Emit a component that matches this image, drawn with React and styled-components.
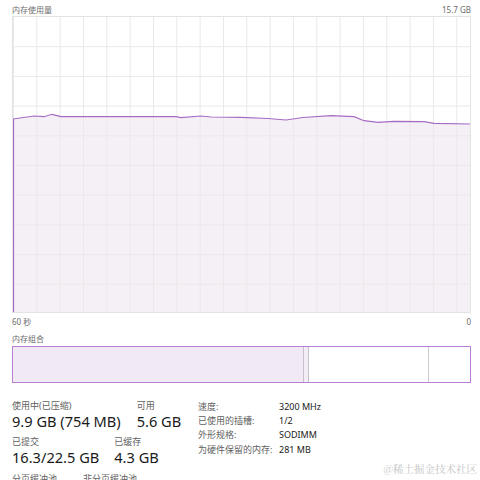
import React from "react";
import styled, { createGlobalStyle } from "styled-components";

const Global = createGlobalStyle`
  html, body { margin: 0; padding: 0; background: #fff; }
  body { font-family: "Noto Sans", "Noto Sans CJK SC", sans-serif; color: #1b1b1b; }
`;

const Page = styled.div`
  position: relative;
  width: 480px;
  height: 480px;
  overflow: hidden;
  box-sizing: border-box;
  padding: 3px 9px 0 12px;
  display: flex;
  flex-direction: column;
  & > * { flex-shrink: 0; }
`;

const AxisRow = styled.div`
  display: flex;
  justify-content: space-between;
  align-items: center;
  height: ${(p) => p.$h}px;
  font-size: 8px;
  color: #6b6b6b;
  line-height: 1;
`;

const GraphBox = styled.div`
  width: 459px;
  height: 297px;
  box-sizing: border-box;
  border: 1px solid #e3e3e3;
  background: #fff;
  svg { display: block; }
`;

const SectionLabel = styled.div`
  font-size: 8px;
  color: #6b6b6b;
  height: 9px;
  line-height: 9px;
  margin-top: ${(p) => p.$mt || 0}px;
`;

const CompBar = styled.div`
  margin-top: 3px;
  width: 459px;
  height: 37px;
  box-sizing: border-box;
  border: 1px solid #b97fd2;
  display: flex;
`;

const Segment = styled.div`
  height: 100%;
  box-sizing: border-box;
  background: ${(p) => p.$bg};
  border-right: ${(p) => (p.$line ? `1px solid ${p.$line}` : "none")};
`;

const Stats = styled.div`
  margin-top: 16px;
  display: flex;
`;

const LeftStats = styled.div`
  width: 186px;
  padding-top: 1px;
  display: flex;
  flex-direction: column;
`;

const StatRow = styled.div`
  display: flex;
  gap: ${(p) => p.$gap}px;
  margin-bottom: ${(p) => p.$mb}px;
`;

const Stat = styled.div`
  display: flex;
  flex-direction: column;
`;

const StatLabel = styled.div`
  font-size: 9px;
  line-height: 11px;
  color: #5f5f5f;
  white-space: nowrap;
`;

const StatValue = styled.div`
  font-size: 14.6px;
  line-height: 20px;
  color: #1a1a1a;
  white-space: nowrap;
`;

const InfoGrid = styled.div`
  display: grid;
  grid-template-columns: 81px auto;
  grid-auto-rows: 14.3px;
  align-items: center;
  font-size: 9px;
  line-height: 11px;
`;

const InfoKey = styled.div`
  color: #5f5f5f;
  white-space: nowrap;
`;

const InfoVal = styled.div`
  color: #1a1a1a;
  white-space: nowrap;
`;

const Watermark = styled.div`
  position: absolute;
  right: 3px;
  top: 461px;
  font-family: "Noto Serif CJK SC", "Liberation Serif", "Noto Sans CJK SC", serif;
  font-size: 10.5px;
  color: #c4c4c4;
  white-space: nowrap;
`;

const W = 457;
const H = 295;
const pts = [
  [0, 102], [21, 99], [31, 99.7], [39, 97.3], [48, 99.7], [163, 99.7], [168, 100.7],
  [188, 99], [198, 100], [228, 100.3], [255, 101.5], [273, 103], [290, 100.5],
  [318, 98.7], [341, 99.7], [351, 103.7], [365, 105.3], [381, 104.3], [411, 104.7],
  [421, 106.3], [457, 107],
];

function Graph() {
  const vlines = [];
  for (let x = 0.5; x < W; x += 23.33) vlines.push(x);
  const hlines = [];
  for (let i = 1; i < 10; i++) hlines.push(i * 29.7);
  const line = pts.map((p) => p.join(",")).join(" ");
  const fill = `0,${H} ${line} ${W},${H}`;
  return (
    <svg width={W} height={H} viewBox={`0 0 ${W} ${H}`}>
      <polygon points={fill} fill="#f4f0f6" />
      {vlines.map((x) => (
        <line key={"v" + x} x1={x} y1={0} x2={x} y2={H} stroke="#ebe8ec" strokeWidth="1" />
      ))}
      {hlines.map((y) => (
        <line key={"h" + y} x1={0} y1={y} x2={W} y2={y} stroke="#ebe8ec" strokeWidth="1" />
      ))}
      <polyline points={`0.5,${H} 0.5,102 ${line}`} fill="none" stroke="#a66cc4" strokeWidth="1.2" />
    </svg>
  );
}

export default function App() {
  return (
    <Page>
      <Global />
      <AxisRow $h={13}>
        <span>内存使用量</span>
        <span>15.7 GB</span>
      </AxisRow>
      <GraphBox>
        <Graph />
      </GraphBox>
      <AxisRow $h={17}>
        <span>60 秒</span>
        <span>0</span>
      </AxisRow>
      <SectionLabel $mt={4}>内存组合</SectionLabel>
      <CompBar>
        <Segment style={{ width: 291 }} $bg="#f1e9f4" $line="#c9c0cc" />
        <Segment style={{ width: 5 }} $bg="#f3eef5" $line="#c9c0cc" />
        <Segment style={{ width: 120 }} $bg="#fff" $line="#cfc8d2" />
        <Segment style={{ flex: 1 }} $bg="#fff" />
      </CompBar>
      <Stats>
        <LeftStats>
          <StatRow $gap={16} $mb={5}>
            <Stat>
              <StatLabel>使用中(已压缩)</StatLabel>
              <StatValue>9.9 GB (754 MB)</StatValue>
            </Stat>
            <Stat>
              <StatLabel>可用</StatLabel>
              <StatValue>5.6 GB</StatValue>
            </Stat>
          </StatRow>
          <StatRow $gap={15} $mb={6}>
            <Stat>
              <StatLabel>已提交</StatLabel>
              <StatValue>16.3/22.5 GB</StatValue>
            </Stat>
            <Stat>
              <StatLabel>已缓存</StatLabel>
              <StatValue>4.3 GB</StatValue>
            </Stat>
          </StatRow>
          <StatRow $gap={26} $mb={0}>
            <Stat>
              <StatLabel>分页缓冲池</StatLabel>
            </Stat>
            <Stat>
              <StatLabel>非分页缓冲池</StatLabel>
            </Stat>
          </StatRow>
        </LeftStats>
        <InfoGrid>
          <InfoKey>速度:</InfoKey>
          <InfoVal>3200 MHz</InfoVal>
          <InfoKey>已使用的插槽:</InfoKey>
          <InfoVal>1/2</InfoVal>
          <InfoKey>外形规格:</InfoKey>
          <InfoVal>SODIMM</InfoVal>
          <InfoKey>为硬件保留的内存:</InfoKey>
          <InfoVal>281 MB</InfoVal>
        </InfoGrid>
      </Stats>
      <Watermark>@稀土掘金技术社区</Watermark>
    </Page>
  );
}
